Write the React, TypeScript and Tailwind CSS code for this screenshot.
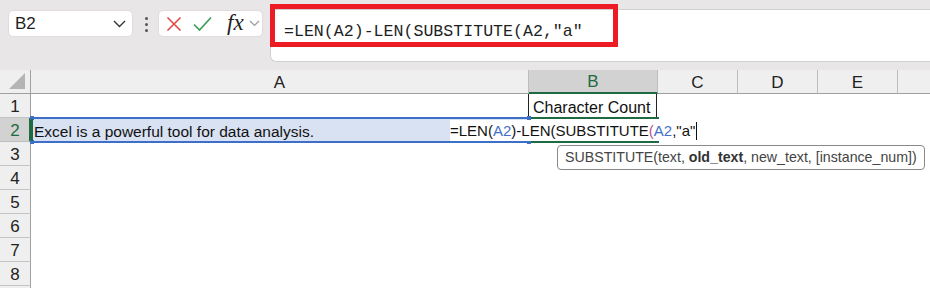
import React from "react";

const SANS = { fontFamily: '"Liberation Sans", Arial, sans-serif' };

function Toolbar() {
  return (
    <div className="relative h-[70px] bg-[#e9e6e8] flex items-start">
      <div className="ml-[8px] mt-[10px] w-[125px] h-[27px] bg-white rounded-[5px] border border-[#e0dcde] flex items-center justify-between pl-[6px] pr-[6px]">
        <span className="text-[17px] text-[#1f1f1f] pt-[1px]" style={SANS}>B2</span>
        <svg width="13" height="8" viewBox="0 0 13 8" className="mt-[1px]">
          <path d="M1 1 L6.5 6.5 L12 1" fill="none" stroke="#333" strokeWidth="1.4" />
        </svg>
      </div>
      <div className="ml-[11px] mt-[17px] w-[4px] flex flex-col items-center gap-[3px]">
        <div className="w-[3px] h-[3px] bg-[#555] rounded-full" />
        <div className="w-[3px] h-[3px] bg-[#555] rounded-full" />
        <div className="w-[3px] h-[3px] bg-[#555] rounded-full" />
      </div>
      <div className="ml-[10px] mt-[10px] w-[105px] h-[27px] bg-white rounded-[5px] border border-[#e0dcde] flex items-center pl-[7px]">
        <svg width="16" height="16" viewBox="0 0 16 16">
          <path d="M1.5 1.5 L14.5 14.5 M14.5 1.5 L1.5 14.5" stroke="#e0453e" strokeWidth="1.5" fill="none" />
        </svg>
        <svg width="19" height="16" viewBox="0 0 19 16" className="ml-[11px]">
          <path d="M1 8.5 L6.5 14 L18 1.5" stroke="#3a9e58" strokeWidth="1.7" fill="none" />
        </svg>
        <span className="ml-[15px] text-[23px] italic text-[#222] leading-none -mt-[3px]" style={{ fontFamily: '"Liberation Serif", serif' }}>fx</span>
        <svg width="11" height="7" viewBox="0 0 11 7" className="ml-[5px]">
          <path d="M1 1 L5.5 5.5 L10 1" fill="none" stroke="#9a9a9a" strokeWidth="1.2" />
        </svg>
      </div>
      <div className="ml-[7px] mt-[9px] flex-1 h-[53px] bg-white rounded-tl-[6px] rounded-bl-[6px] border border-r-0 border-[#d2cfd1] pl-[13px] pt-[9px]">
        <span className="text-[16.6px] text-[#1f1f1f] leading-[20px]" style={{ fontFamily: '"Liberation Mono", monospace' }}>
          =LEN(A2)-LEN(SUBSTITUTE(A2,"a"
        </span>
      </div>
      <div className="absolute left-[270px] top-[4px] w-[348px] h-[43px] border-[5px] border-[#ed1c24]" />
    </div>
  );
}

const cols = [
  { name: "A", w: 498 },
  { name: "B", w: 129, sel: true },
  { name: "C", w: 80 },
  { name: "D", w: 80 },
  { name: "E", w: 80 },
  { name: "", w: 80 },
];

function Header() {
  return (
    <div className="flex h-[24px] bg-[#efefef] border-b border-[#a0a0a0]">
      <div className="w-[31px] shrink-0 border-r border-[#a0a0a0] relative">
        <svg width="18" height="18" viewBox="0 0 18 18" className="absolute right-[4px] bottom-[3px]">
          <path d="M17 1 L17 17 L1 17 Z" fill="#b4b4b4" />
        </svg>
      </div>
      {cols.map((c, i) => (
        <div
          key={i}
          className={
            c.sel
              ? "shrink-0 flex items-center justify-center pt-[2px] bg-[#d2d2d2] text-[#1e6b41] border-r border-[#bdbdbd] border-b-2 border-b-[#1e6b41] mb-[-1px] text-[17px]"
              : "shrink-0 flex items-center justify-center pt-[2px] text-[#222] border-r border-[#bdbdbd] text-[17px]"
          }
          style={{ width: c.w }}
        >
          {c.name}
        </div>
      ))}
    </div>
  );
}

function Row({ n, children }: { n: number; children?: React.ReactNode }) {
  const sel = n === 2;
  return (
    <div className="flex h-[24px]">
      <div
        className={
          sel
            ? "w-[31px] shrink-0 bg-[#d2d2d2] text-[#1e6b41] border-r-2 border-r-[#1e6b41] border-b border-b-[#bdbdbd] flex items-center justify-center text-[17px] pt-[2px] pl-[1px]"
            : "w-[31px] shrink-0 bg-[#efefef] text-[#222] border-r border-r-[#a0a0a0] border-b border-b-[#c4c4c4] flex items-center justify-center text-[17px] pt-[2px]"
        }
      >
        {n}
      </div>
      <div className="flex-1 flex relative">{children}</div>
    </div>
  );
}

export default function App() {
  return (
    <div className="w-[930px] h-[288px] overflow-hidden bg-white relative" style={SANS}>
      <Toolbar />
      <Header />
      <Row n={1}>
        <div className="w-[498px] shrink-0" />
        <div className="w-[129px] shrink-0 border-l border-r border-[#222] flex items-center pl-[4px] pt-[3px] text-[16px] text-[#111] -ml-[1px] h-[24px]">
          Character Count
        </div>
      </Row>
      <Row n={2}>
        <div className="w-[498px] shrink-0 bg-[#d9e2f3] flex items-center pl-[3px] pt-[3px] text-[15.5px] text-[#111]">
          Excel is a powerful tool for data analysis.
        </div>
      </Row>
      {[3, 4, 5, 6, 7, 8].map((n) => (
        <Row key={n} n={n} />
      ))}
      <div className="flex h-[24px]">
        <div className="w-[31px] shrink-0 bg-[#efefef] border-r border-r-[#a0a0a0]" />
      </div>

      {/* range highlight around A2 */}
      <div className="absolute left-[32px] top-[117px] w-[498px] h-[2px] bg-[#3d6fc8]" />
      <div className="absolute left-[32px] top-[141px] w-[498px] h-[2px] bg-[#3d6fc8]" />
      <div className="absolute left-[30px] top-[116px] w-[4px] h-[4px] bg-[#3d6fc8]" />
      <div className="absolute left-[30px] top-[140px] w-[4px] h-[4px] bg-[#3d6fc8]" />
      <div className="absolute left-[527px] top-[116px] w-[4px] h-[4px] bg-[#3d6fc8]" />
      <div className="absolute left-[527px] top-[140px] w-[4px] h-[4px] bg-[#3d6fc8]" />
      <div className="absolute left-[31px] top-[119px] w-[2px] h-[22px] bg-[#1e6b41]" />

      {/* active cell B2 */}
      <div className="absolute left-[531px] top-[117px] w-[128px] h-[2px] bg-[#1e6b41]" />
      <div className="absolute left-[531px] top-[141px] w-[128px] h-[2px] bg-[#1e6b41]" />

      {/* editing text overflow */}
      <div className="absolute left-[450px] top-[120px] h-[21px] pr-[4px] pt-[2px] bg-white flex items-center text-[15px] text-[#111] whitespace-nowrap">
        <span>=LEN(</span>
        <span className="text-[#4670c8]">A2</span>
        <span>)-LEN(SUBSTITUTE</span>
        <span className="text-[#c0508a]">(</span>
        <span className="text-[#4670c8]">A2</span>
        <span>,"a"</span>
        <span className="inline-block w-[1px] h-[18px] bg-[#111] ml-[1px] -mt-[2px]" />
      </div>

      {/* tooltip */}
      <div className="absolute left-[557px] top-[145px] h-[25px] px-[7px] pt-[1px] bg-white border border-[#8a8a8a] rounded-[4px] flex items-center text-[14.2px] text-[#444] whitespace-nowrap">
        SUBSTITUTE(text,&nbsp;<span className="font-bold text-[#333]">old_text</span>, new_text, [instance_num])
      </div>
    </div>
  );
}
